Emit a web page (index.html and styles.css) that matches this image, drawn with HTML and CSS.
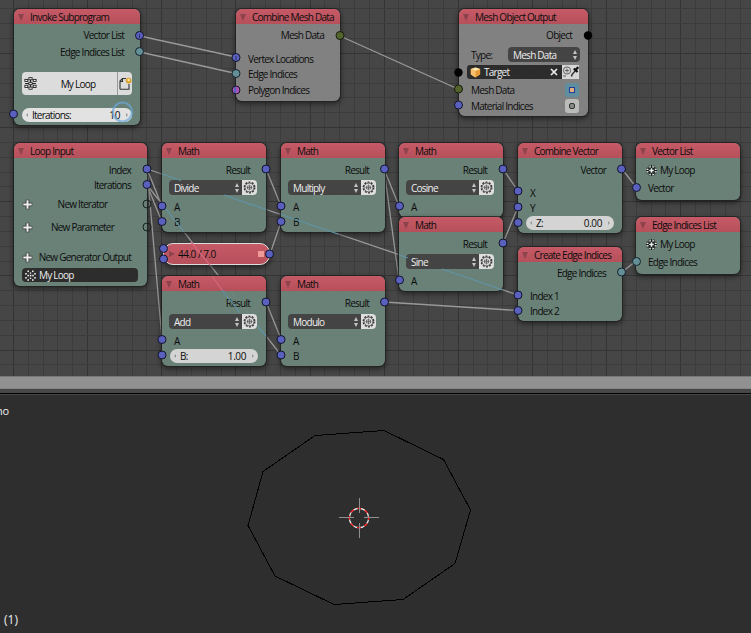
FILE: index.html
```
<!DOCTYPE html>
<html lang="en">
<head>
<meta charset="utf-8">
<title>Node Editor</title>
<link rel="stylesheet" href="styles.css">
</head>
<body>
<svg class="defs" width="0" height="0">
  <symbol id="gear" viewBox="0 0 15 15">
    <circle cx="7.500" cy="7.500" r="5.300" fill="none" stroke="#333" stroke-width="1.300" stroke-dasharray="2 1.330"/>
    <circle cx="7.500" cy="7.500" r="4.400" fill="none" stroke="#444" stroke-width=".8"/>
    <path d="M5.500 6h4v3h-4zM7.500 4.500v6M4.500 7.500h6" stroke="#555" stroke-width=".7" fill="none"/>
  </symbol>
  <symbol id="arrows" viewBox="0 0 6 12">
    <path d="M3 1L5 5H1zM3 11L1 7H5z" fill="#c4c4c4"/>
  </symbol>
  <symbol id="plus" viewBox="0 0 11 11">
    <path d="M5.500 .8v9.400M.8 5.500h9.400" stroke="#333" stroke-width="3.600"/>
    <path d="M5.500 1.300v8.400M1.300 5.500h8.400" stroke="#eee" stroke-width="2"/>
  </symbol>
  <symbol id="tree" viewBox="0 0 12 12">
    <g fill="#eee" stroke="#222" stroke-width=".8">
      <path d="M1 2.500h3M8 2.500h3M1 6h10M1 9.500h3M8 9.500h3M6 1v10" stroke-width="1"/>
      <rect x="4.500" y=".6" width="3" height="2"/><rect x="4.500" y="4.900" width="3" height="2.200"/><rect x="4.500" y="9.300" width="3" height="2"/>
      <rect x=".8" y="2.200" width="2.700" height="2"/><rect x="8.500" y="2.200" width="2.700" height="2"/>
      <rect x=".8" y="7.600" width="2.700" height="2"/><rect x="8.500" y="7.600" width="2.700" height="2"/>
    </g>
  </symbol>
  <symbol id="mesh" viewBox="0 0 11 11">
    <path d="M3.300.5v10M5.500 0v11M7.900.5v10M.5 3.200h10M0 5.500h11M.5 7.900h10" stroke="#1c1c1c" stroke-width="1"/>
    <path d="M3.200 5.500h4.600M5.500 3.200v4.600" stroke="#eee" stroke-width="1.100"/>
    <path d="M3.300 1.800h1.400M6.600 1.800h1.400M.8 4.300h1.400M9 4.300h1.400M3.300 9.500h1.400M6.600 9.500h1.400M.8 6.800h1.400M9 6.800h1.400" stroke="#e4e4e4" stroke-width="1.200"/>
  </symbol>
  <symbol id="loop" viewBox="0 0 11 11">
    <g fill="#e8e8e8">
      <rect x="2.400" y=".5" width="1.600" height="1.600"/><rect x="7" y=".5" width="1.600" height="1.600"/>
      <rect x=".2" y="3" width="1.600" height="1.600"/><rect x="9.200" y="3" width="1.600" height="1.600"/>
      <rect x="2.400" y="4.800" width="1.600" height="1.600"/><rect x="4.800" y="4.800" width="1.600" height="1.600"/><rect x="7.200" y="4.800" width="1.600" height="1.600"/>
      <rect x=".2" y="7" width="1.600" height="1.600"/><rect x="9.200" y="7" width="1.600" height="1.600"/>
      <rect x="2.400" y="9.200" width="1.600" height="1.600"/><rect x="7" y="9.200" width="1.600" height="1.600"/><rect x="4.800" y="2.400" width="1.400" height="1.400"/><rect x="4.800" y="7.600" width="1.400" height="1.400"/>
    </g>
  </symbol>
</svg>

<main class="screen">
<section class="editor">
  <svg class="layer" id="grid" width="751" height="376" shape-rendering="crispEdges"></svg>
  <svg class="layer links" width="751" height="376">
    <path d="M140 36L236 57M140 52L236 73.500M340 36L458 89M147 169L162 206M147 185L162 222M147 169L162 339M147 169L518 295M147 185L281 355M266 169L281 206M270 254L281 222M384 169L399 206M384 169L399 280M503 169L518 191M503 243L518 207M622 169L636 187M622 272L636 261M266 302L281 339M384 302L518 310.500"/>
  </svg>

  <article class="node green" id="invoke">
    <header>Invoke Subprogram</header>
    <div class="row out h22">Vector List</div>
    <div class="row out h12">Edge Indices List</div>
    <div class="treebtn"><svg width="13" height="13"><use href="#tree"/></svg><span>My Loop</span>
      <b><svg width="13" height="13" viewBox="0 0 13 13"><path d="M1 12.200V4L3.500 1.500H7M1 12.200H10V7M1 4.500H3.500V2" fill="none" stroke="#333" stroke-width="1.100"/><circle cx="9.600" cy="3.600" r="2.900" fill="#dba02a"/><circle cx="9.600" cy="3" r="1.200" fill="#fff0b0"/></svg></b></div>
    <div class="num g13"><span>Iterations:</span><span class="val">10</span></div>
  </article>

  <article class="node gray" id="combine">
    <header>Combine Mesh Data</header>
    <div class="row out h22">Mesh Data</div>
    <div class="row h15 g5">Vertex Locations</div>
    <div class="row h16">Edge Indices</div>
    <div class="row h16">Polygon Indices</div>
  </article>

  <article class="node gray" id="output">
    <header>Mesh Object Output</header>
    <div class="row out h22">Object</div>
    <div class="row h17">Type:<div class="drop type"><span>Mesh Data</span><svg width="6" height="12"><use href="#arrows"/></svg></div></div>
    <div class="target">
      <svg width="11" height="11" viewBox="0 0 11 11"><path d="M.8 2L5.500.5 10.200 2V7.500L5.500 10.500.8 7.500z" fill="#e89a35"/><path d="M.8 2L5.500 4 10.200 2 5.500.5z" fill="#ffe9b0"/><path d="M5.500 4V10.500L.8 7.500V2z" fill="#f6c070"/></svg>
      <span>Target</span>
      <svg class="x" width="8" height="8" viewBox="0 0 8 8"><path d="M1 1L7 7M7 1L1 7" stroke="#eee" stroke-width="1.700"/></svg>
      <i><svg width="18" height="13" viewBox="0 0 18 13"><circle cx="5" cy="5.500" r="3.600" fill="none" stroke="#555" stroke-width=".9"/><path d="M3 5.500h4M5 3.500v4M1 11h3" stroke="#555" stroke-width=".9"/><path d="M9.500 11.500L10 9.500 13.500 5.500" stroke="#333" stroke-width="1.500" fill="none"/><path d="M11.800 3.500L15.500 7M13.300 5.200L16.300 2" stroke="#111" stroke-width="2.300"/></svg></i>
    </div>
    <div class="row h17">Mesh Data<div class="chip blue"></div></div>
    <div class="row h16">Material Indices<div class="chip"></div></div>
  </article>

  <article class="node green" id="input">
    <header>Loop Input</header>
    <div class="row out h16 g4">Index</div>
    <div class="row out h14">Iterations</div>
    <div class="row add h16 g4"><svg width="11" height="11"><use href="#plus"/></svg><span>New Iterator</span></div>
    <div class="row add h16 g7"><svg width="11" height="11"><use href="#plus"/></svg><span>New Parameter</span></div>
    <div class="row add h16 g14"><svg width="11" height="11"><use href="#plus"/></svg><span class="wide">New Generator Output</span></div>
    <div class="namefield"><svg width="11" height="11"><use href="#loop"/></svg>My Loop</div>
  </article>

  <article class="node green math" id="divide">
    <header>Math</header>
    <div class="row out h16 g4">Result</div>
    <div class="op"><div class="drop"><span>Divide</span><svg width="6" height="12"><use href="#arrows"/></svg></div><svg class="gear" width="15" height="15"><use href="#gear"/></svg></div>
    <div class="row h15 g4">A</div><div class="row h16">B</div>
  </article>
  <article class="node green math" id="multiply">
    <header>Math</header>
    <div class="row out h16 g4">Result</div>
    <div class="op"><div class="drop"><span>Multiply</span><svg width="6" height="12"><use href="#arrows"/></svg></div><svg class="gear" width="15" height="15"><use href="#gear"/></svg></div>
    <div class="row h15 g4">A</div><div class="row h16">B</div>
  </article>
  <article class="node green math" id="cosine">
    <header>Math</header>
    <div class="row out h16 g4">Result</div>
    <div class="op"><div class="drop"><span>Cosine</span><svg width="6" height="12"><use href="#arrows"/></svg></div><svg class="gear" width="15" height="15"><use href="#gear"/></svg></div>
    <div class="row h15 g4">A</div>
  </article>
  <article class="node green math" id="sine">
    <header>Math</header>
    <div class="row out h16 g4">Result</div>
    <div class="op"><div class="drop"><span>Sine</span><svg width="6" height="12"><use href="#arrows"/></svg></div><svg class="gear" width="15" height="15"><use href="#gear"/></svg></div>
    <div class="row h15 g4">A</div>
  </article>
  <article class="node green math" id="add">
    <header>Math</header>
    <div class="row out h16 g4">Result</div>
    <div class="op g3"><div class="drop"><span>Add</span><svg width="6" height="12"><use href="#arrows"/></svg></div><svg class="gear" width="15" height="15"><use href="#gear"/></svg></div>
    <div class="row h15 g4">A</div>
    <div class="num g1"><span>B:</span><span class="val">1.00</span></div>
  </article>
  <article class="node green math" id="modulo">
    <header>Math</header>
    <div class="row out h16 g4">Result</div>
    <div class="op g3"><div class="drop"><span>Modulo</span><svg width="6" height="12"><use href="#arrows"/></svg></div><svg class="gear" width="15" height="15"><use href="#gear"/></svg></div>
    <div class="row h15 g4">A</div><div class="row h16">B</div>
  </article>

  <div class="collapsed" id="constant"><span>44.0 / 7.0</span></div>

  <article class="node green" id="vector">
    <header>Combine Vector</header>
    <div class="row out h16 g4">Vector</div>
    <div class="row h15 g7">X</div>
    <div class="row h15">Y</div>
    <div class="num g1"><span>Z:</span><span class="val">0.00</span></div>
  </article>
  <article class="node green" id="edges">
    <header>Create Edge Indices</header>
    <div class="row out h16 g3">Edge Indices</div>
    <div class="row h15 g7">Index 1</div>
    <div class="row h16">Index 2</div>
  </article>
  <article class="node green" id="vlist">
    <header>Vector List</header>
    <div class="row h16 g4 tree"><svg width="11" height="11"><use href="#mesh"/></svg>My Loop</div>
    <div class="row h15 g2">Vector</div>
  </article>
  <article class="node green" id="elist">
    <header>Edge Indices List</header>
    <div class="row h16 g4 tree"><svg width="11" height="11"><use href="#mesh"/></svg>My Loop</div>
    <div class="row h15 g2">Edge Indices</div>
  </article>

  <svg class="layer" width="751" height="376">
    <path class="through" d="M162 174L181 180.500M224 195L266 209.500M281 214.500L338 234M399 255L408 258M442 269L503 290M162 204L184 232M222 290L240 313M258 327L266 336"/>
    <path class="throughred" d="M191 242L210 265M212 276L222 290"/>
    <g fill="#5a60bd" stroke="#14142a">
      <circle cx="139.500" cy="35.500" r="4"/><circle cx="13.500" cy="114" r="4"/><circle cx="236" cy="57.500" r="4"/><circle cx="458.500" cy="105" r="4"/>
      <circle cx="147" cy="169" r="4"/><circle cx="147" cy="184.500" r="4"/><circle cx="162" cy="206" r="4"/><circle cx="162" cy="221.500" r="4"/>
      <circle cx="266" cy="169" r="4"/><circle cx="281" cy="206" r="4"/><circle cx="281" cy="221.500" r="4"/><circle cx="163.500" cy="248.500" r="4"/><circle cx="163.500" cy="259" r="4"/><circle cx="269.500" cy="254" r="4"/>
      <circle cx="384.500" cy="169" r="4"/><circle cx="399.500" cy="206" r="4"/><circle cx="503" cy="169" r="4"/><circle cx="503" cy="243" r="4"/><circle cx="399.500" cy="280" r="4"/>
      <circle cx="162" cy="339.500" r="4"/><circle cx="162" cy="355" r="4"/><circle cx="266" cy="302" r="4"/><circle cx="281" cy="339.500" r="4"/><circle cx="281" cy="355" r="4"/><circle cx="384.500" cy="302" r="4"/>
      <circle cx="518" cy="191" r="4"/><circle cx="518" cy="207" r="4"/><circle cx="518" cy="222.500" r="4"/><circle cx="621.500" cy="169" r="4"/><circle cx="636.500" cy="187.500" r="4"/><circle cx="518" cy="295" r="4"/><circle cx="518" cy="310.500" r="4"/>
    </g>
    <g fill="#648f96" stroke="#14222a"><circle cx="139.500" cy="51.500" r="4"/><circle cx="236" cy="73.500" r="4"/><circle cx="621.500" cy="272" r="4"/><circle cx="636.500" cy="261.500" r="4"/></g>
    <g fill="#53652d" stroke="#171c0c"><circle cx="340" cy="35.500" r="4"/><circle cx="458.500" cy="89" r="4"/></g>
    <circle cx="236" cy="90" r="4" fill="#a556b5" stroke="#1c1424"/><path d="M235 87v6" stroke="#5a60bd" stroke-width="2"/>
    <path d="M139.500 34v4M236 56v4" stroke="#2b3070"/>
    <circle cx="588" cy="35.500" r="4.200"/><circle cx="458.500" cy="72.500" r="4.200"/>
    <g fill="none" stroke="#14201b"><circle cx="147" cy="204" r="4"/><circle cx="147" cy="227" r="4"/></g>
    <circle cx="122.500" cy="112" r="9.500" fill="none" stroke="#6ba8d8" stroke-opacity=".7" stroke-width="2.200"/>
  </svg>
</section>
<div class="scrollbar"></div>
<div class="divider"></div>
<section class="viewport">
  <span class="mode">no</span>
  <svg class="scene" width="751" height="238" viewBox="0 395 751 238">
    <path d="M315 435.500L384 430.500 443.500 459.500 470.500 510 455 563.500 403 599.500 334 604.500 275 576 248 525.500 263 471.500z" fill="none" stroke="#000" shape-rendering="crispEdges"/>
    <circle cx="359" cy="518" r="9.700" fill="none" stroke="#eee" stroke-width="1.200"/>
    <circle cx="359" cy="518" r="9.700" fill="none" stroke="#f00" stroke-width="1.200" stroke-dasharray="3.809" stroke-dashoffset="1.900"/>
    <path d="M359.500 498v15M359.500 523v15M339 517.500h15M364 517.500h15" stroke="#909090" shape-rendering="crispEdges"/>
  </svg>
  <span class="frame">(1)</span>
</section>
</main>
<script src="grid.js"></script>
</body>
</html>
```
FILE: grid.js
```
const grid = document.getElementById('grid');
const step = 14.83;
function lines(origin, count, extent, vertical) {
  for (let pass = 0; pass < 2; pass++) {
    for (let i = -4; i < count; i++) {
      const major = i % 5 === 0;
      if (major !== (pass === 1)) continue;
      const p = Math.floor(origin + i * step);
      const r = document.createElementNS('http://www.w3.org/2000/svg', 'rect');
      r.setAttribute('x', vertical ? p : 0);
      r.setAttribute('y', vertical ? 0 : p);
      r.setAttribute('width', vertical ? 1 : extent);
      r.setAttribute('height', vertical ? extent : 1);
      r.setAttribute('fill', major ? '#343434' : '#3c3c3c');
      grid.appendChild(r);
    }
  }
}
lines(13.4, 51, 376, true);
lines(53.4, 23, 751, false);
```
FILE: styles.css
```
* { box-sizing: border-box; }
body { margin: 0; background: #2e2e2e; font: 10px/12px "Open Sans", "Noto Sans", sans-serif; letter-spacing: -0.75px; color: #0c0c0c; overflow: hidden; }
.defs { position: absolute; }
svg { flex: none; display: block; }
.screen { display: flex; flex-direction: column; width: 751px; height: 633px; overflow: hidden; }
.editor { position: relative; height: 376px; flex: none; overflow: hidden; background: #464646; }
.layer { position: absolute; left: 0; top: 0; }
.links path { fill: none; stroke: #999; stroke-width: 1.3; }
.through { fill: none; stroke: #5f93a5; stroke-width: 1.2; }
.throughred { fill: none; stroke: #d8677c; stroke-width: 1.2; }

.node { position: absolute; width: 104px; border-radius: 6px; box-shadow: 0 0 0 1px #222c, 0 2px 5px 1px #0007; white-space: nowrap; }
.green { background: #6b8479f4; }
.gray { background: #848484f4; }
.node header { position: relative; height: 15px; padding: 2px 0 0 16px; border-radius: 6px 6px 0 0; background: linear-gradient(#c65a66, #b5505b); }
.node header::before { content: ""; position: absolute; left: 4px; top: 5px; border: 3.5px solid transparent; border-top: 7px solid #8d434c; border-bottom: 0; }

.row { position: relative; display: flex; align-items: center; padding: 0 16px 0 12px; }
.out { justify-content: flex-end; }
.h12 { height: 12px; } .h14 { height: 14px; } .h15 { height: 15px; } .h16 { height: 16px; } .h17 { height: 17px; } .h22 { height: 22px; }
.op { display: flex; height: 15px; margin: 2px 9px 0 7px; }
.treebtn { display: flex; align-items: center; margin: 14px 8px 0; height: 23px; border-radius: 4px; background: #dcdcdc; padding-left: 2px; }
.treebtn span { flex: 1; text-align: center; padding-left: 2px; }
.treebtn b { display: grid; place-items: center; width: 15px; height: 23px; border-left: 1px solid #999; }
.num { position: relative; display: flex; align-items: center; justify-content: space-between; height: 14px; border-radius: 7px; padding: 0 12px 0 10px; background: #d4d4d4; margin-left: 8px; margin-right: 8px; }
.num::before, .num::after { content: ""; position: absolute; top: 5px; border: 2.5px solid transparent; }
.num::before { left: 2px; border-right-color: #999; }
.num::after { right: 2px; border-left-color: #999; }
.val { letter-spacing: -0.4px; }
#invoke .num { background: #e2e2e2; }
.g1 { margin-top: 1px; } .g2 { margin-top: 2px; } .g3 { margin-top: 3px; } .g4 { margin-top: 4px; } .g5 { margin-top: 5px; } .g7 { margin-top: 7px; } .g13 { margin-top: 13px; } .g14 { margin-top: 14px; }

.drop { flex: 1; display: flex; align-items: center; justify-content: space-between; height: 15px; padding: 0 2px 0 5px; border-radius: 4px 0 0 4px; background: #444; color: #eee; }
.gear { background: #dedede; border-radius: 0 4px 4px 0; }
.type { position: absolute; left: 49px; width: 72px; border-radius: 4px; }
.target { display: flex; align-items: center; gap: 3px; height: 14px; margin: 2px 9px 2px 8px; padding-left: 3px; background: #2c2c2c; color: #eee; border-radius: 3px; }
.target .x { margin-left: auto; margin-right: 1px; }
.target i { width: 17px; height: 14px; background: #d6d6d6; overflow: hidden; }
.chip { position: absolute; right: 9px; width: 14px; height: 14px; border-radius: 3px; background: #b9bcb9; display: grid; place-items: center; }
.chip::before { content: ""; width: 4px; height: 4px; border-radius: 2px; border: 1px solid #333; background: #888; }
.blue { background: #5f8f9f; }
.blue::before { border: 1px solid #223a9a; background: #e0b080; border-radius: 0; }
.add { padding: 0 16px 0 8px; }
.add span { flex: 1; text-align: center; padding-left: 1px; }
.add .wide { text-align: right; }
.namefield { display: flex; align-items: center; gap: 3px; height: 14px; margin: 3px 9px 0 8px; padding-left: 3px; border-radius: 4px; background: #2d2d2d; color: #eee; }
.tree { padding-left: 10px; gap: 3px; }

#invoke { left: 14px; top: 9px; width: 126px; height: 116px; }
#combine { left: 236px; top: 9px; height: 92px; }
#output { left: 459px; top: 9px; width: 129px; height: 107px; }
#input { left: 14px; top: 143px; width: 133px; height: 143px; }
#divide { left: 162px; top: 143px; height: 89px; }
#multiply { left: 281px; top: 143px; height: 89px; }
#cosine { left: 399px; top: 143px; height: 74px; }
#sine { left: 399px; top: 217px; height: 74px; }
#add { left: 162px; top: 276px; height: 90px; }
#modulo { left: 281px; top: 276px; height: 90px; }
#vector { left: 518px; top: 143px; height: 90px; }
#edges { left: 518px; top: 247px; height: 74px; }
#vlist { left: 636px; top: 143px; height: 57px; }
#elist { left: 636px; top: 217px; height: 57px; }

.collapsed { position: absolute; left: 163px; top: 243px; width: 107px; height: 22px; display: flex; align-items: center; padding-left: 14px; letter-spacing: -0.5px; border: 1px solid #ddd; border-radius: 10px; background: linear-gradient(#c65a66, #b5505b); box-shadow: 0 2px 5px 1px #0007; }
.collapsed::before { content: ""; position: absolute; left: 5px; top: 7px; border: 3.5px solid transparent; border-left: 6px solid #8d434c; border-right: 0; }
.collapsed::after { content: ""; position: absolute; right: 5px; top: 7px; width: 6px; height: 6px; background: repeating-linear-gradient(90deg, #f09a98 0 1.6px, #c65a66 1.6px 2.2px); }

.scrollbar { flex: none; height: 13px; background: #919191; border-top: 1px solid #777; border-bottom: 1px solid #848484; }
.divider { flex: none; height: 6px; background: linear-gradient(#474747 0 4px, #000 4px 5px, #474747 5px); }
.viewport { position: relative; flex: 1; display: flex; flex-direction: column; justify-content: space-between; color: #eee; background: #2e2e2e; padding: 10px 0 7px; }
.scene { position: absolute; left: 0; top: 0; }
.mode { margin-left: -4px; font-size: 11px; letter-spacing: -0.3px; }
.frame { margin-left: 4px; letter-spacing: 0; font-size: 12px; }
```
